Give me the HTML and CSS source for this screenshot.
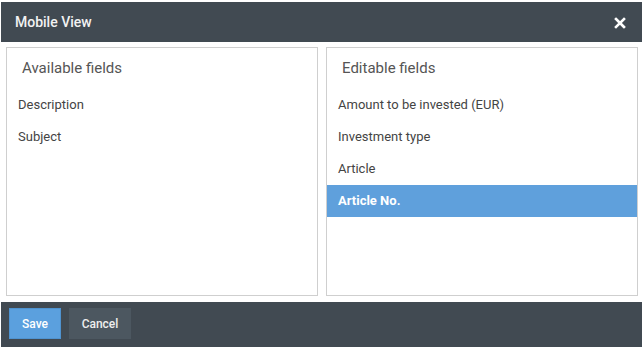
FILE: index.html
```html
<!DOCTYPE html>
<html>
<head>
<meta charset="utf-8">
<link rel="stylesheet" href="styles.css">
</head>
<body>
<div class="dialog">
  <div class="header">
    <span class="title">Mobile View</span>
    <span class="close"><svg width="12" height="12" viewBox="0 0 12 12"><path d="M2 2L10 10M10 2L2 10" stroke="#fff" stroke-width="2.6" stroke-linecap="square"/></svg></span>
  </div>
  <div class="content">
    <div class="box">
      <div class="box-title">Available fields</div>
      <div class="item">Description</div>
      <div class="item">Subject</div>
    </div>
    <div class="box">
      <div class="box-title">Editable fields</div>
      <div class="item">Amount to be invested (EUR)</div>
      <div class="item">Investment type</div>
      <div class="item">Article</div>
      <div class="item selected">Article No.</div>
    </div>
  </div>
  <div class="footer">
    <button class="btn save">Save</button>
    <button class="btn cancel">Cancel</button>
  </div>
</div>
</body>
</html>
```
FILE: styles.css
```css
html, body {
  margin: 0;
  padding: 0;
  background: #fff;
}
body {
  font-family: Roboto, "Liberation Sans", sans-serif;
  width: 644px;
  height: 347px;
  overflow: hidden;
}
.dialog {
  margin: 2px 2px 0 1px;
  height: 345px;
  display: flex;
  flex-direction: column;
}
.header {
  height: 40px;
  background: #414a52;
  display: flex;
  align-items: center;
  justify-content: space-between;
  padding: 0 16px 0 14px;
}
.title {
  color: #f2f2f2;
  font-size: 14px;
  font-weight: 500;
}
.close {
  display: flex;
  margin-top: 1px;
}
.content {
  flex: 1;
  display: flex;
  gap: 8px;
  padding: 5px 4px 6px 5px;
  background: #fff;
}
.box {
  flex: 1;
  border: 1px solid #cfcfcf;
  display: flex;
  flex-direction: column;
}
.box-title {
  font-size: 15px;
  color: #555;
  padding: 11px 0 0 15px;
  height: 30px;
  box-sizing: border-box;
  margin-bottom: 11px;
}
.item {
  height: 32px;
  line-height: 32px;
  font-size: 13px;
  color: #444;
  padding-left: 11px;
}
.item.selected {
  background: #5fa0dc;
  color: #fff;
  font-weight: bold;
}
.footer {
  height: 45px;
  background: #414a52;
  display: flex;
  gap: 8px;
  padding: 6px 8px 0;
  box-sizing: border-box;
  align-items: flex-start;
}
.btn {
  height: 31px;
  border: 1px solid transparent;
  font-family: Roboto, "Liberation Sans", sans-serif;
  font-size: 12px;
  font-weight: 500;
  color: #fff;
  padding: 0;
  margin: 0;
}
.save {
  width: 52px;
  background: #5ba0de;
  border-color: #4f93d0;
}
.cancel {
  width: 62px;
  background: #4c5760;
  color: #eee;
}
```
